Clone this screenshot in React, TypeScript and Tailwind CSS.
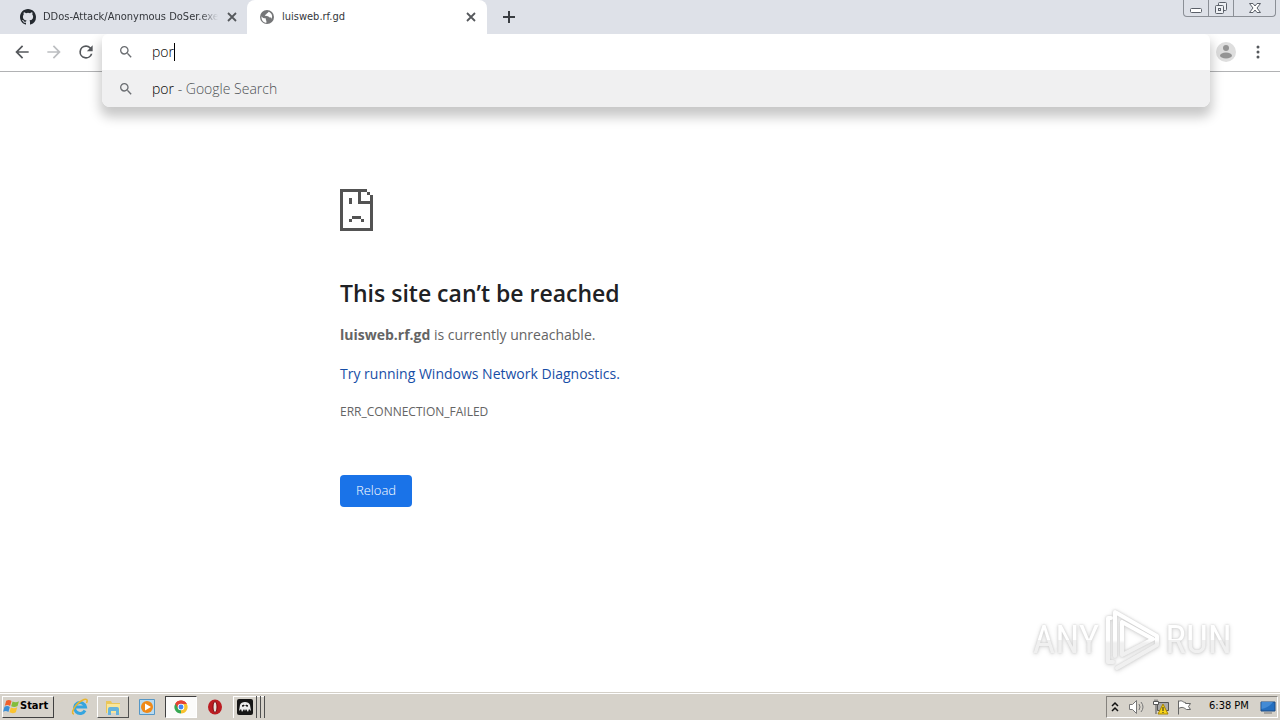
import React from "react";

function GithubIcon() {
  return (
    <svg viewBox="0 0 16 16" className="size-4 shrink-0" fill="#24292f" aria-hidden="true">
      <path d="M8 0C3.58 0 0 3.58 0 8c0 3.54 2.29 6.53 5.47 7.59.4.07.55-.17.55-.38 0-.19-.01-.82-.01-1.49-2.01.37-2.53-.49-2.69-.94-.09-.23-.48-.94-.82-1.13-.28-.15-.68-.52-.01-.53.63-.01 1.08.58 1.23.82.72 1.21 1.87.87 2.33.66.07-.52.28-.87.51-1.07-1.78-.2-3.64-.89-3.64-3.95 0-.87.31-1.59.82-2.15-.08-.2-.36-1.02.08-2.12 0 0 .67-.21 2.2.82a7.6 7.6 0 0 1 4 0c1.53-1.04 2.2-.82 2.2-.82.44 1.1.16 1.92.08 2.12.51.56.82 1.27.82 2.15 0 3.07-1.87 3.75-3.65 3.95.29.25.54.73.54 1.48 0 1.07-.01 1.93-.01 2.2 0 .21.15.46.55.38A8 8 0 0 0 16 8c0-4.42-3.58-8-8-8z" />
    </svg>
  );
}

function GlobeIcon() {
  return (
    <svg viewBox="0 0 16 16" className="size-4 shrink-0" aria-hidden="true">
      <circle cx="8" cy="8" r="7" fill="#757678" />
      <path d="M2.5 7.2c.9 2 2.400 1.700 4 2.100.8.500-.1 1.800.9 2.500v2c-3-.2-5.300-2.800-4.900-6.600zM9.500 2.700c-.2 1.500-1.800 1.100-2.100 2.300-.2 1-1.700.6-1.500 1.700.7.700 2.900-.2 3.900 1 .6.800 1.200 1 2.100.9.700.1.800 1.300.2 2.200 2-2.900 1.100-6.800-2.600-8.100z" fill="#fff" />
    </svg>
  );
}

function SearchIcon() {
  return (
    <svg viewBox="0 0 24 24" className="size-4 shrink-0" fill="#6b6e72" aria-hidden="true">
      <path d="M15.500 14h-.79l-.28-.27A6.470 6.470 0 0 0 16 9.500 6.500 6.500 0 1 0 9.500 16c1.610 0 3.090-.59 4.230-1.570l.27.28v.79l5 4.990L20.490 19zm-6 0C7.010 14 5 11.990 5 9.500S7.010 5 9.500 5 14 7.010 14 9.500 11.990 14 9.500 14z" />
    </svg>
  );
}

function CloseIcon() {
  return (
    <svg viewBox="0 0 16 16" className="size-4" stroke="#55585c" strokeWidth="1.800" fill="none" aria-hidden="true">
      <path d="M4 4l8 8M12 4l-8 8" />
    </svg>
  );
}

function NavButton({ label, path, color }: { label: string; path: string; color: string }) {
  return (
    <button aria-label={label} className="grid size-8 place-items-center">
      <svg viewBox="0 0 24 24" className={`size-5 ${color}`} fill="currentColor" aria-hidden="true">
        <path d={path} />
      </svg>
    </button>
  );
}

function TabStrip() {
  return (
    <header className="flex h-[34px] shrink-0 items-start bg-[#dee1e8] font-['DejaVu_Sans_Condensed','DejaVu_Sans',sans-serif] text-[11px] text-[#33363b]">
      <div className="flex h-[34px] w-[247px] items-center gap-[7px] pr-[7px] pl-5">
        <GithubIcon />
        <a href="#github" className="min-w-0 flex-1 overflow-hidden whitespace-nowrap [mask-image:linear-gradient(90deg,#000_90%,transparent)]">
          DDos-Attack/Anonymous DoSer.exe
        </a>
        <button aria-label="Close tab" className="ml-[-1px]"><CloseIcon /></button>
      </div>
      <div className="flex h-[34px] w-60 items-center gap-[7px] rounded-t-lg bg-white pr-2 pl-3">
        <GlobeIcon />
        <a href="#luisweb" className="flex-1">luisweb.rf.gd</a>
        <button aria-label="Close tab"><CloseIcon /></button>
      </div>
      <button aria-label="New tab" className="ml-[14px] grid h-[34px] w-4 place-items-center">
        <svg viewBox="0 0 16 16" className="size-4" stroke="#3a3d42" strokeWidth="2" aria-hidden="true">
          <path d="M8 2v12M2 8h12" />
        </svg>
      </button>
      <div className="mr-1 ml-auto flex h-[17px] divide-x divide-[#8b8f96] rounded-b border border-t-0 border-[#8b8f96] text-[#5b6069]">
        <button aria-label="Minimize" className="grid w-[25px] place-items-center">
          <svg viewBox="0 0 14 14" className="size-[14px]" fill="#fff" stroke="currentColor" aria-hidden="true">
            <rect x="1.500" y="7.500" width="11" height="4" rx="1" />
          </svg>
        </button>
        <button aria-label="Restore" className="grid w-[25px] place-items-center">
          <svg viewBox="0 0 14 14" className="size-[14px]" fill="#eef0f4" stroke="currentColor" aria-hidden="true">
            <rect x="4.500" y="1.500" width="8" height="8" rx="1" />
            <rect x="1.500" y="4.500" width="8" height="8" rx="1" />
            <rect x="4.500" y="7.500" width="2" height="2" />
          </svg>
        </button>
        <button aria-label="Close" className="grid w-[41px] place-items-center">
          <svg viewBox="0 0 14 12" className="h-3 w-[14px]" fill="#fff" stroke="currentColor" aria-hidden="true">
            <path d="M1.500 1.500h3.500l2 2.500 2-2.500h3.500L9 6l3.500 4.500H9L7 8l-2 2.500H1.500L5 6z" />
          </svg>
        </button>
      </div>
    </header>
  );
}

function Omnibox() {
  return (
    <div className="relative z-10 h-9 flex-1">
      <div className="absolute inset-x-0 top-0 overflow-hidden rounded-b-lg rounded-t-md bg-white text-sm font-light shadow-[0_8px_12px_2px_rgba(0,0,0,0.22)] [clip-path:inset(0_-20px_-30px_-20px)]">
        <label className="flex h-9 items-center pl-4">
          <SearchIcon />
          <input aria-label="Address and search bar" defaultValue="por" className="ml-[18px] text-black outline-none [field-sizing:content]" />
          <span className="h-[18px] w-px bg-black" />
        </label>
        <a href="#search" className="flex h-[37px] items-center bg-[#f0f0f1] pl-4 text-[#4d5054]">
          <SearchIcon />
          <span className="ml-[18px]"><span className="text-black">por</span> - Google Search</span>
        </a>
      </div>
    </div>
  );
}

function Toolbar() {
  return (
    <nav className="flex h-[38px] shrink-0 border-b border-[#b1b2b4] bg-white font-['Open_Sans',sans-serif]">
      <div className="flex h-9 w-[102px] items-center pl-[6px]">
        <NavButton label="Back" color="text-[#55585c]" path="M20 11H7.830l5.590-5.590L12 4l-8 8 8 8 1.410-1.410L7.830 13H20v-2z" />
        <NavButton label="Forward" color="text-[#bcbec1]" path="M12 4l-1.410 1.410L16.170 11H4v2h12.170l-5.580 5.590L12 20l8-8z" />
        <NavButton label="Reload page" color="text-[#55585c]" path="M17.650 6.350A7.960 7.960 0 0 0 12 4a8 8 0 1 0 7.730 10h-2.080A6 6 0 1 1 12 6c1.660 0 3.140.69 4.220 1.780L13 11h7V4z" />
      </div>
      <Omnibox />
      <div className="flex h-9 w-[70px] items-center pl-[6px]">
        <button aria-label="Profile">
          <svg viewBox="0 0 20 20" className="size-5" aria-hidden="true">
            <circle cx="10" cy="10" r="10" fill="#dedede" />
            <circle cx="10" cy="6" r="3" fill="#949494" />
            <ellipse cx="10" cy="13.500" rx="6" ry="3" fill="#949494" />
          </svg>
        </button>
        <button aria-label="Menu" className="ml-[14px]">
          <svg viewBox="0 0 16 16" className="size-4" fill="#55585c" aria-hidden="true">
            <circle cx="8" cy="3" r="1.500" />
            <circle cx="8" cy="8" r="1.500" />
            <circle cx="8" cy="13" r="1.500" />
          </svg>
        </button>
      </div>
    </nav>
  );
}

function SadPage() {
  return (
    <svg viewBox="0 0 11 14" className="h-[42px] w-[33px]" fill="#535353" shapeRendering="crispEdges" aria-hidden="true">
      <path d="M0 0h9v1H7v3h3V3h1v11H0zm1 1v12h9V5H6V1zM9 1h1v1H9zM3 3h1v2H3zM4 9h3v1H4zM3 10h1v1H3zM7 10h1v1H7z" fillRule="evenodd" />
      <path d="M10 2h1v2h-1z" />
    </svg>
  );
}

function Watermark() {
  return (
    <div className="absolute right-12 bottom-5 flex items-center gap-1 font-['Roboto_Condensed','Liberation_Sans',sans-serif] text-[39px] leading-none [filter:drop-shadow(0_0_1px_#ccc)_drop-shadow(0_1px_2px_#ddd)]">
      <span className="bg-linear-to-b from-white from-50% to-[#f0f0f0] to-50% bg-clip-text text-transparent">ANY</span>
      <svg viewBox="0 0 58 64" className="h-16 w-[58px]" fill="none" stroke="url(#mark)" strokeWidth="4" strokeLinejoin="round" strokeLinecap="round" aria-hidden="true">
        <defs>
          <linearGradient id="mark" gradientUnits="userSpaceOnUse" x1="0" y1="0" x2="0" y2="64">
            <stop offset="0.500" stopColor="#fff" />
            <stop offset="0.550" stopColor="#f0f0f0" />
          </linearGradient>
        </defs>
        <path d="M12 40V4l42 24v9L14 60M12 4v44M19 14v33L50 31M5 10v44h5M5 10h3M19 14l31 17" />
      </svg>
      <span className="bg-linear-to-b from-white from-50% to-[#f0f0f0] to-50% bg-clip-text text-transparent">RUN</span>
    </div>
  );
}

function ErrorPage() {
  return (
    <main className="relative min-h-0 flex-1 bg-white font-['Open_Sans','Noto_Sans',sans-serif] text-[#646464]">
      <div className="mx-auto flex max-w-[600px] flex-col items-start pt-[117px]">
        <SadPage />
        <h1 className="mt-12 text-[23px] leading-7 font-semibold text-[#202124]">This site can’t be reached</h1>
        <p className="mt-4 text-sm leading-6"><strong>luisweb.rf.gd</strong> is currently unreachable.</p>
        <a href="#diagnostics" className="mt-[15px] text-sm leading-6 text-[#174ea6]">Try running Windows Network Diagnostics.</a>
        <p className="mt-4 text-xs leading-5">ERR_CONNECTION_FAILED</p>
        <button className="mt-[53px] h-8 rounded bg-[#1a73e8] px-4 text-[13px] font-light text-white">Reload</button>
      </div>
      <Watermark />
    </main>
  );
}

function Taskbar() {
  return (
    <footer className="flex h-7 shrink-0 items-center border-t border-[#d4d0c8] bg-[#d6d2ca] px-[2px] font-['DejaVu_Sans_Condensed','DejaVu_Sans',sans-serif] text-[11px] text-black shadow-[inset_0_1px_#fff]">
      <button className="flex h-[22px] w-[52px] items-center border border-t-white border-r-[#404040] border-b-[#404040] border-l-white font-bold">
        <svg viewBox="0 0 16 16" className="size-[17px] shrink-0" aria-hidden="true">
          <path d="M3 2.500c2-1 3.500-.8 5 .3L6.700 7.500c-1.500-1-3-1.100-5-.3z" fill="#f0612c" />
          <path d="M9 3.200c2 1 4 .9 6-.2l-1.300 4.600c-2 1.100-4 1.200-6 .2z" fill="#83bd3b" />
          <path d="M1.400 8.200c2-.9 3.500-.8 5 .3l-1.300 4.700c-1.500-1-3-1.200-5-.3z" fill="#3b8fd6" />
          <path d="M7.400 8.900c2 1 4 .9 6-.2l-1.300 4.700c-2 1.100-4 1.100-6 .1z" fill="#fac32f" />
        </svg>
        Start
      </button>
      <button aria-label="Internet Explorer" className="ml-[15px] grid h-[22px] w-[22px] place-items-center">
        <svg viewBox="0 0 18 18" className="size-[18px]" fill="none" aria-hidden="true">
          <path d="M14 12.500A5.500 5.500 0 1 1 14.500 9H5" stroke="#35a5df" strokeWidth="3" />
          <path d="M3 16C-1 16 4 6 11 2.500c5-2.500 6-.5 4.500 2.500" stroke="#e8b52d" strokeWidth="1.500" />
        </svg>
      </button>
      <button aria-label="File Explorer" className="ml-[6px] grid h-[22px] w-8 place-items-center border border-t-white border-r-[#505050] border-b-[#505050] border-l-white">
        <svg viewBox="0 0 18 18" className="size-[18px]" aria-hidden="true">
          <path d="M2 3h5l1 2h8v10H2z" fill="#eac65a" />
          <path d="M3 6h13v9H3z" fill="#f9e69a" />
          <path d="M4 17v-6q0-2 2-2h7q2 0 2 2v6h-3v-4H7v4z" fill="#66b3dc" />
        </svg>
      </button>
      <button aria-label="Media Player" className="ml-[9px] grid size-[18px] place-items-center">
        <svg viewBox="0 0 16 16" className="size-4" aria-hidden="true">
          <path d="M.5.5h15v15H.5z" fill="#b8daf0" stroke="#5597c6" />
          <circle cx="8" cy="8" r="6" fill="#ef8918" />
          <path d="M6 4.500v7L12 8z" fill="#fff" />
        </svg>
      </button>
      <button aria-label="Chrome" className="ml-[9px] grid h-[22px] w-8 place-items-center border border-t-[#404040] border-r-white border-b-white border-l-[#404040] bg-[#fbfbfa]">
        <svg viewBox="0 0 16 16" className="size-[14px]" aria-hidden="true">
          <path d="M8 8L1.500 4.200A7.500 7.500 0 0 1 14.500 4.200z" fill="#e54335" />
          <path d="M8 8V.5l6.500 3.700A7.500 7.500 0 0 1 8 15.500z" fill="#f9c22e" />
          <path d="M8 8v7.500A7.500 7.500 0 0 1 1.500 4.200z" fill="#36a853" />
          <path d="M8 4.500h6.600A7.500 7.500 0 0 0 1.500 4.200L5 10z" fill="#e54335" />
          <circle cx="8" cy="8" r="3.800" fill="#fff" />
          <circle cx="8" cy="8" r="2.800" fill="#4285f4" />
        </svg>
      </button>
      <button aria-label="Opera" className="ml-[9px] grid size-[18px] place-items-center">
        <svg viewBox="0 0 16 16" className="size-4" aria-hidden="true">
          <ellipse cx="8" cy="8" rx="7" ry="7.500" fill="#bc1c22" />
          <ellipse cx="8" cy="8" rx="2" ry="5.500" fill="#e6e0da" stroke="#7d080f" />
        </svg>
      </button>
      <button aria-label="Anonymous DoSer" className="ml-[9px] flex h-[22px] items-center gap-[3px] border-t border-l border-white pl-[3px]">
        <svg viewBox="0 0 16 16" className="size-4" aria-hidden="true">
          <rect width="16" height="16" rx="2" fill="#161616" />
          <path d="M2 12l1-6c1-4 9-4 10 0l1 6-2-2-1 3-2-3-1 2-1-2-2 3-1-3z" fill="#eee" />
          <path d="M5 7l2-1v1zM11 7L9 6v1z" stroke="#161616" />
        </svg>
        <span className="h-[22px] w-px bg-[#505050]" />
        <span className="h-[22px] w-px bg-[#505050]" />
        <span className="h-[22px] w-px bg-[#505050]" />
      </button>
      <div className="ml-auto flex h-[22px] w-[172px] items-center border border-t-[#85827d] border-r-white border-b-white border-l-[#85827d] pr-px pl-1">
        <button aria-label="Show hidden icons">
          <svg viewBox="0 0 8 12" className="h-3 w-2" stroke="#111" strokeWidth="1.500" fill="none" aria-hidden="true"><path d="M1 5l3-3 3 3M1 10l3-3 3 3" /></svg>
        </button>
        <button aria-label="Volume" className="ml-[9px]">
          <svg viewBox="0 0 18 16" className="h-4 w-[18px]" fill="#fff" stroke="#777" aria-hidden="true">
            <path d="M1.500 5.500h3l4-4v13l-4-4h-3z" />
            <path d="M11 5q2 3 0 6M13 3q4 5 0 10" fill="none" />
          </svg>
        </button>
        <button aria-label="Network" className="ml-[6px]">
          <svg viewBox="0 0 18 16" className="h-4 w-[18px]" aria-hidden="true">
            <path d="M5.500 3.500h11v8h-11z" fill="#aaa" stroke="#555" />
            <path d="M1.500 2.500h5v3h-5zM4 6v9M3 .5v2M5 .5v2" fill="#fff" stroke="#555" />
            <path d="M11 5l5 10H6z" fill="#f8d518" stroke="#a88400" />
            <path d="M11 8v4M11 13v1" stroke="#222" />
          </svg>
        </button>
        <button aria-label="Action Center" className="ml-[7px]">
          <svg viewBox="0 0 16 16" className="size-4" fill="#fff" stroke="#666" aria-hidden="true">
            <path d="M1.500 1.500v14M1.500 2.500c4-2 4 1 7 1v1h5l-2 3 2 3h-4c-3-2-4-3-8-1z" />
          </svg>
        </button>
        <time className="ml-4 flex-1 whitespace-nowrap">6:38 PM</time>
        <button aria-label="Show desktop">
          <svg viewBox="0 0 16 16" className="size-4" aria-hidden="true">
            <path d="M1 3h14v9H1z" fill="#246fc0" stroke="#1e4c83" />
            <path d="M1.500 10C6 9 10 7 13 3H1.500z" fill="#438bd5" />
            <path d="M4 14h8" stroke="#777" />
          </svg>
        </button>
      </div>
    </footer>
  );
}

export default function App() {
  return (
    <div className="flex min-h-screen flex-col bg-white">
      <TabStrip />
      <Toolbar />
      <ErrorPage />
      <Taskbar />
    </div>
  );
}
